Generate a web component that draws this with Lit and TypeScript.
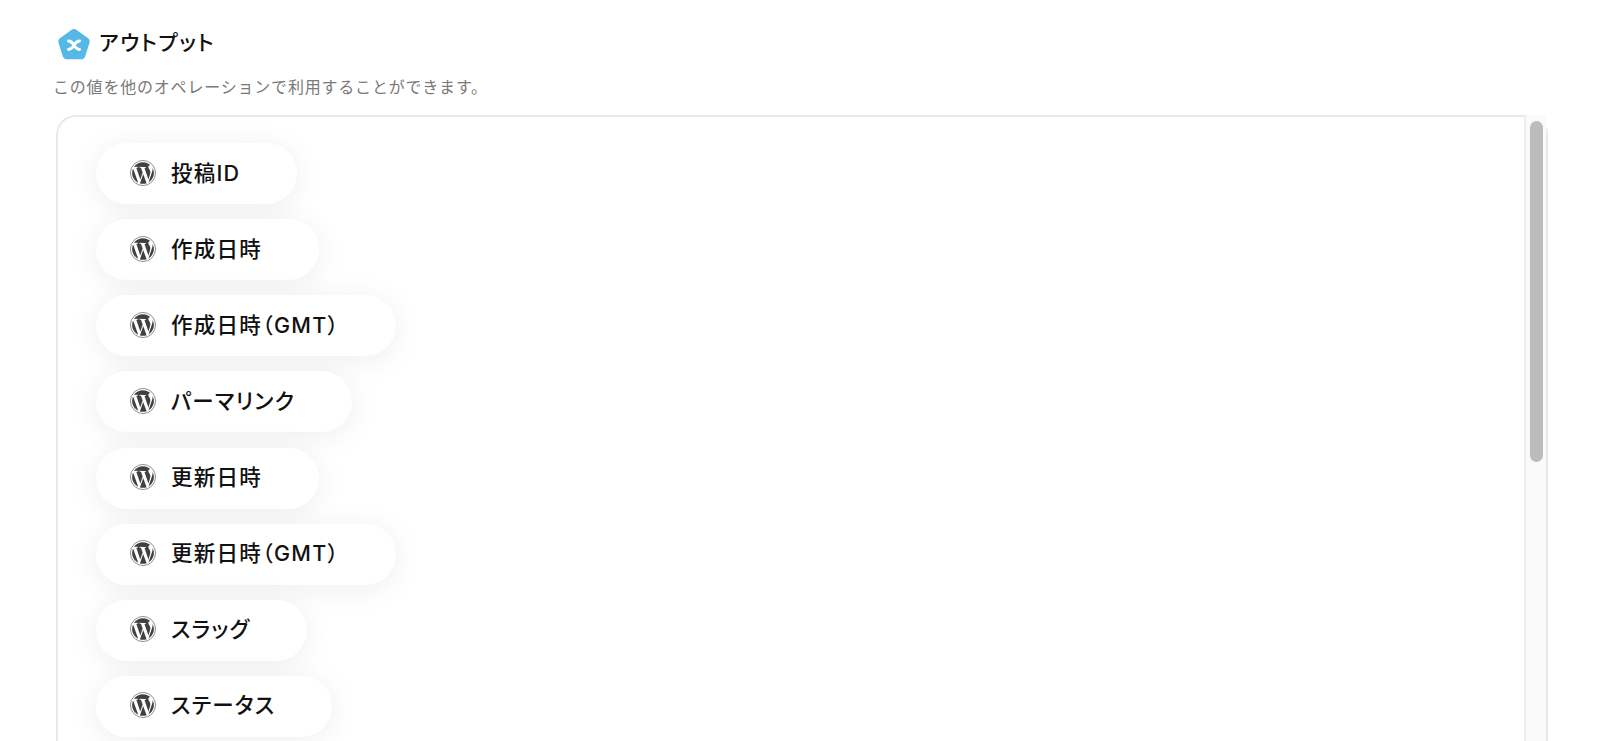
import { LitElement, html, css, svg } from "lit";
import { customElement } from "lit/decorators.js";

const WP = "M21.469 6.825c.84 1.537 1.318 3.3 1.318 5.175 0 3.979-2.156 7.456-5.363 9.325l3.295-9.527c.615-1.54.82-2.771.82-3.864 0-.405-.026-.78-.07-1.11m-7.981.105c.647-.03 1.232-.105 1.232-.105.582-.075.514-.93-.067-.899 0 0-1.755.135-2.88.135-1.064 0-2.85-.15-2.85-.15-.585-.03-.661.855-.075.885 0 0 .54.061 1.125.09l1.68 4.605-2.37 7.08L5.354 6.9c.649-.03 1.234-.1 1.234-.1.585-.075.516-.93-.065-.896 0 0-1.746.138-2.874.138-.2 0-.438-.008-.69-.015C4.911 3.15 8.235 1.215 12 1.215c2.809 0 5.365 1.072 7.286 2.833-.046-.003-.091-.009-.141-.009-1.06 0-1.812.923-1.812 1.914 0 .89.513 1.643 1.06 2.531.411.72.89 1.643.89 2.977 0 .915-.354 1.994-.821 3.479l-1.075 3.585-3.9-11.61.001.014zM12 22.784c-1.059 0-2.081-.153-3.048-.437l3.237-9.406 3.315 9.087c.024.053.05.101.078.149-1.12.393-2.325.609-3.582.609M1.211 12c0-1.564.336-3.05.935-4.39L7.29 21.709C3.694 19.96 1.212 16.271 1.211 12";

const ITEMS = ["投稿ID", "作成日時", "作成日時（GMT）", "パーマリンク", "更新日時", "更新日時（GMT）", "スラッグ", "ステータス"];

@customElement("app-root")
export class AppRoot extends LitElement {
  static styles = css`
    :host {
      display: block;
      height: 741px;
      overflow: hidden;
      background: #fff;
      font-family: Inter, "Noto Sans CJK JP", sans-serif;
      font-feature-settings: "palt";
      color: #111;
    }
    .page {
      display: flex;
      flex-direction: column;
      height: 741px;
      padding: 0 52px 0 56px;
      box-sizing: border-box;
    }
    .head {
      display: flex;
      align-items: center;
      gap: 9px;
      padding: 29px 0 0 2px;
      height: 30px;
    }
    .logo { width: 32px; height: 31px; display: block; flex: none; }
    .title { font-size: 21px; font-weight: 500; line-height: 28px; margin-top: -2px; letter-spacing: 1.6px; }
    .sub {
      margin: 16px 0 0 -3px;
      font-size: 16px;
      font-feature-settings: normal;
      letter-spacing: 0.8px;
      line-height: 24px;
      color: #797979;
    }
    .box {
      margin-top: 16px;
      flex: 1;
      min-height: 0;
      display: flex;
      border: 2px solid #e9e9e9;
      border-bottom: none;
      border-radius: 20px 20px 0 0;
    }
    .list {
      flex: 1;
      display: flex;
      flex-direction: column;
      align-items: flex-start;
      gap: 15.15px;
      padding: 26px 0 0 38px;
    }
    .pill {
      display: flex;
      align-items: center;
      flex: none;
      height: 61px;
      box-sizing: border-box;
      padding: 0 57px 0 34px;
      gap: 15px;
      border-radius: 31px;
      background: #fff;
      box-shadow: 0 4px 30px rgba(0, 0, 0, 0.07);
      font-size: 21.5px;
      font-weight: 500;
      letter-spacing: 1.25px;
      white-space: nowrap;
    }
    .pill span { padding-bottom: 5px; }
    .wp { width: 26px; height: 26px; flex: none; display: block; margin-top: -2px; }
    .rail {
      width: 22px;
      flex: none;
      box-sizing: border-box;
      margin-top: -2px;
      padding: 6px 3px 0 4px;
      background: #fafafa;
      border-left: 2px solid #ededed;
    }
    .thumb { height: 341px; border-radius: 7px; background: #bcbcbc; }
  `;

  render() {
    return html`
      <div class="page">
        <div class="head">
          <svg class="logo" viewBox="1.6 1.4 28.8 27.8">
            <path d="M13.6 2.2a4 4 0 0 1 4.8 0l10 7.3a4 4 0 0 1 1.5 4.5l-3.8 11.8a4 4 0 0 1-3.9 2.8H9.8a4 4 0 0 1-3.9-2.8L2.1 14a4 4 0 0 1 1.5-4.5z" fill="#56b8e6"></path>
            <path d="M11 12.2c2.8 0 3.4 1.4 5 3.8 1.6 2.4 2.2 3.8 5 3.8M21 12.2c-2.8 0-3.4 1.4-5 3.8-1.6 2.4-2.2 3.8-5 3.8" fill="none" stroke="#fff" stroke-width="2.6" stroke-linecap="round"></path>
          </svg>
          <span class="title">アウトプット</span>
        </div>
        <div class="sub">この値を他のオペレーションで利用することができます。</div>
        <div class="box">
          <div class="list">
            ${ITEMS.map(
              (t) => html`
                <div class="pill">
                  <svg class="wp" viewBox="0 0 24 24">${svg`<circle cx="12" cy="12" r="11.6" fill="none" stroke="#808080" stroke-width="0.8"></circle><path d=${WP} fill="#404040" transform="translate(12 12) scale(.93) translate(-12 -12)"></path>`}</svg>
                  <span>${t}</span>
                </div>
              `
            )}
          </div>
          <div class="rail"><div class="thumb"></div></div>
        </div>
      </div>
    `;
  }
}
